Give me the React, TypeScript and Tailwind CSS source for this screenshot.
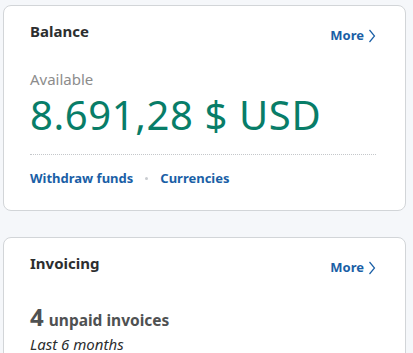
const font = { fontFamily: '"Noto Sans", "Open Sans", sans-serif' };

const MoreLink = () => (
  <a className="flex items-center gap-1 text-[13px] font-bold text-[#1a5fa6]" href="#">
    More
    <svg width="8" height="14" viewBox="0 0 8 14" fill="none" stroke="#1a5fa6" strokeWidth="1.2">
      <path d="M1.5 1 L6.5 7 L1.5 13" />
    </svg>
  </a>
);

const CardHeader = ({ title }: { title: string }) => (
  <div className="flex h-[23px] items-start justify-between">
    <h2 className="text-[15px] leading-[23px] font-bold text-[#2c2e2f]">{title}</h2>
    <div className="pr-[3px] pt-[6px]">
      <MoreLink />
    </div>
  </div>
);

export default function App() {
  return (
    <div className="min-h-[353px] w-[413px] bg-[#f5f7fa] pt-[5px] pl-[3px] pr-[7px]" style={font}>
      <div className="flex h-[206px] flex-col rounded-[8px] border border-[#d2d5d8] bg-white px-[26px] pt-[14px]">
        <CardHeader title="Balance" />
        <p className="mt-[26px] text-[15px] leading-[20px] text-[#8c8c8c]">Available</p>
        <p className="mt-[2px] text-[40px] leading-[48px] tracking-[0.6px] text-[#087d68]">8.691,28 $ USD</p>
        <div className="mt-[15px] mr-[3px] border-t border-dotted border-[#c4c7ca]" />
        <div className="mt-[14px] flex items-center gap-[12px] text-[13px] leading-[19.5px] font-bold text-[#1a5fa6]">
          <a href="#">Withdraw funds</a>
          <span className="h-[3px] w-[3px] rounded-full bg-[#c9ccd0]" />
          <a href="#">Currencies</a>
        </div>
      </div>
      <div className="mt-[26px] flex h-[140px] flex-col rounded-[8px] border border-[#d2d5d8] bg-white px-[26px] pt-[14px]">
        <CardHeader title="Invoicing" />
        <p className="mt-[28px] flex items-baseline gap-[5px] leading-[28px] text-[#4f5152]">
          <span className="text-[24px] font-bold">4</span>
          <span className="text-[15.5px] font-bold">unpaid invoices</span>
        </p>
        <p className="text-[15px] leading-[20px] italic text-[#2c2e2f]">Last 6 months</p>
      </div>
    </div>
  );
}
